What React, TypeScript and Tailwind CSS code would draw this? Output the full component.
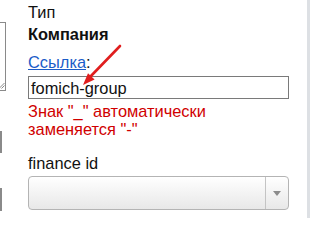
import React from "react";

export default function App() {
  return (
    <div
      className="relative flex w-[311px] h-[218px] overflow-hidden bg-white text-[16.4px] leading-[18px] text-[#111]"
      style={{ fontFamily: '"Liberation Sans", Arial, sans-serif' }}
    >
      {/* left partial column */}
      <div className="flex flex-col w-[7px] shrink-0">
        <div className="relative mt-[22px] h-[69px] w-[6px] border-r border-t border-b border-[#8a8a8a]">
          <svg className="absolute right-[0px] bottom-[1px]" width="6" height="7" viewBox="0 0 6 7">
            <path d="M0 6.5 L5.5 1" stroke="#8a8a8a" strokeWidth="1" />
            <path d="M2.5 6.5 L5.5 3.5" stroke="#8a8a8a" strokeWidth="1" />
          </svg>
        </div>
        <div className="mt-[40px] h-[22px] w-[2px] bg-[#8a8a8a]" />
        <div className="mt-[35px] h-[23px] w-[2px] bg-[#8a8a8a]" />
      </div>

      {/* main form */}
      <div className="flex flex-col pl-[21px] pt-[3px] w-[279px] shrink-0">
        <div>Тип</div>
        <div className="mt-[4px] font-bold">Компания</div>
        <div className="mt-[10px]">
          <span className="text-[#1a5cc8] underline">Ссылка</span>
          <span>:</span>
        </div>
        <div className="mt-[5px] h-[23px] w-[261px] border border-[#7a7a7a] pl-[2px] flex items-center">
          fomich-group
        </div>
        <div className="mt-[3px] w-[261px] text-[#d00000]">
          Знак "_" автоматически заменяется "-"
        </div>
        <div className="mt-[16px]">finance id</div>
        <div className="mt-[4px] h-[34px] w-[261px] flex rounded-[4px] border border-[#b4b4b4] bg-gradient-to-b from-white to-[#e8e8e8]">
          <div className="flex-1" />
          <div className="w-[23px] border-l border-[#c4c4c4] flex items-center justify-center">
            <svg width="8" height="5" viewBox="0 0 8 5">
              <path d="M0 0 L8 0 L4 5 Z" fill="#8c8c8c" />
            </svg>
          </div>
        </div>
      </div>

      {/* right edge bar */}
      <div className="w-[21px] shrink-0" />
      <div className="w-[3px] h-full bg-[#dde0e4] shrink-0" />

      {/* red annotation arrow */}
      <svg className="absolute left-0 top-0 pointer-events-none" width="311" height="218">
        <line x1="120" y1="46" x2="90" y2="77" stroke="#e01e1e" strokeWidth="2.6" strokeLinecap="round" />
        <polygon points="83,85 94.6,79.4 88,73.2" fill="#e01e1e" />
      </svg>
    </div>
  );
}
